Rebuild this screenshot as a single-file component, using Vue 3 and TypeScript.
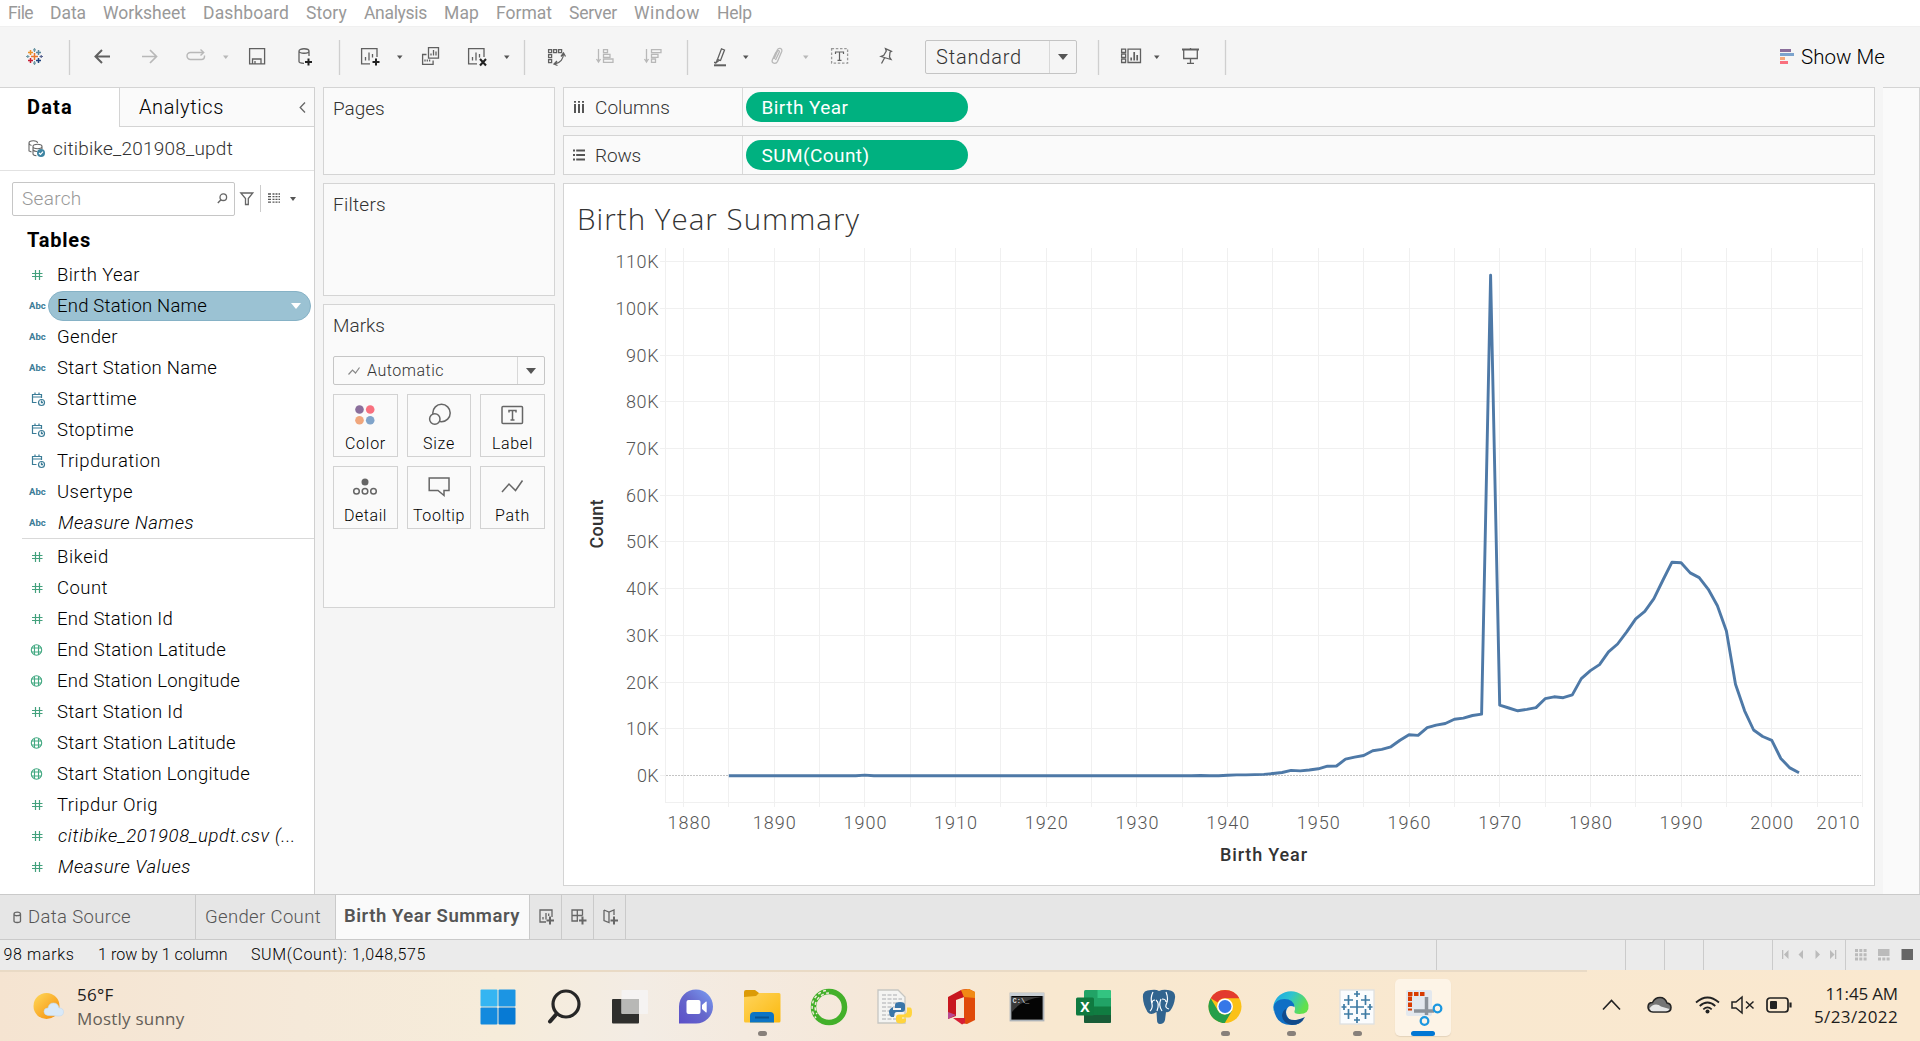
<script setup lang="ts">
import type { Directive } from 'vue'

interface Tool { icon: string; x: number; w: number; dim?: boolean }
interface Field { kind: string; name: string; w: number; italic?: boolean; selected?: boolean }

// Tracks a label so that it fills the given width in pixels.
const vFit: Directive<HTMLElement, number> = {
  mounted(el, { value }) {
    const range = document.createRange()
    range.selectNodeContents(el)
    const width = range.getBoundingClientRect().width
    const count = (el.textContent ?? '').length
    el.style.letterSpacing = `${((value + 2 - width) / count).toFixed(3)}px`
  },
}

const menus: [string, number][] = [
  ['File', 25], ['Data', 36], ['Worksheet', 83], ['Dashboard', 86], ['Story', 41], ['Analysis', 63],
  ['Map', 35], ['Format', 56], ['Server', 48], ['Window', 66], ['Help', 35],
]

const glyph: Record<string, string> = {
  logo: `<g stroke-width="1.5"><path stroke="#e8762c" d="M8.5 5v7M5 8.5h7"/><path stroke="#c72037" d="M4.5 10v5M2 12.5h5"/><path stroke="#1f447e" d="M12.5 10v5M10 12.5h5"/><path stroke="#eb9129" d="M4.500 2v5M2 4.5h5"/><path stroke="#59879b" d="M12.5 2v5M10 4.500h5"/><g stroke-width="1.200"><path stroke="#7099a6" d="M8.500 0v4M7 1.800h3M8.500 13v4M7 15.200h3"/><path stroke="#5b6591" d="M15.200 7v3M13.500 8.500h3.500"/><path stroke="#7099a6" d="M1.800 7v3M0 8.500h3.500"/></g></g>`,
  sep: `<path stroke="#cfcfcf" d="M.5 -8v35"/>`,
  back: `<path stroke-width="2" d="M16 8.500H1.500M8 2L1.500 8.500L8 15"/>`,
  fwd: `<path stroke-width="1.700" d="M0 8.500h14.500M8 2l6.500 6.500L8 15"/>`,
  redo: `<path stroke-width="1.400" d="M5 11.500H3.500a3 3 0 0 1 0-7H16M13.500 1.500l3.200 3l-3.200 3M17.500 7.500v1a3 3 0 0 1-3 3H5"/>`,
  caret: `<path fill="currentColor" stroke="none" d="M0 7.500h5.500L2.750 11z"/>`,
  save: `<path d="M.6 .6h15v15.300H.6zM3.500 15.500V11h8.500v4.500M6 13v2.500"/>`,
  db: `<path d="M1 3v10.500c0 1 2 1.800 5 1.800M1 3c0-3 10-3 10 0s-10 3-10 0M11 3v5"/><path stroke="#222" stroke-width="2" d="M10.500 10.500v7M7 14h7"/>`,
  sheet: `<path d="M16 9V.6H.6v15.200H9M4.500 12.500V9M8 12.500V4.500M11.500 9.500V6"/><path stroke="#222" stroke-width="2" d="M15 10.500v7M11.500 14h7"/>`,
  dup: `<path d="M4.500 6.500H.6v9.900h10.500v-4M6.500 -.4h10v10.500h-10zM9 7.500v-2M11.500 7.500V2M14 7.500V3.500M3 13.500v-2M5.300 13.500v-2M7.600 13.500v-2"/>`,
  clear: `<path d="M16 9V.6H.6v15.200H9M4.500 12.500V9M8 12.500V4.500M11.500 9.500V6"/><path stroke="#222" stroke-width="2.100" d="M12 11l6 6.500M18 11l-6 6.500"/>`,
  swap: `<path d="M.6 1.600h3v3h-3zM5.600 1.600h3v3h-3zM10.600 1.600h3v3h-3zM.6 6.600h3v3h-3zM.6 11.600h3v3h-3zM15.500 5.500c0 5-3 9.500-9 10.500M13 8.500l2.500-3.500l2 3.500M9 13l-3 3l3.500 1.500"/>`,
  asc: `<path stroke-width="1.300" d="M2.500 1v12M.5 11l2 3l2-3M7.500 1.600h4v3h-4zM7.500 6.300h6.500v3H7.500zM7.500 11h9.500v3.300H7.500z"/>`,
  desc: `<path stroke-width="1.300" d="M2.500 1v12M.5 11l2 3l2-3M7.500 1.600h9.500v3H7.500zM7.500 6.300h6.500v3H7.500zM7.500 11h4v3.300h-4z"/>`,
  pen: `<path d="M7.500 .8l3 1.200l-4 10.500l-3-1.200zM3.300 11.500l-1 3l3-2.200M0 14.500h3"/><path stroke-width="2" d="M0 17.300h12"/>`,
  clip: `<path d="M3 9.500L6.300 2C7.500 -.6 11.500 0 10.800 3.200L6.500 13.500c-1.500 3-6.500 2-5.200-1.500L5 4M4.500 12L8.300 4c.5-1.500-1.500-2-2-.5L3 11"/>`,
  text: `<path stroke-dasharray="2.500 1.700" stroke="#999" d="M.6 .6h16v14.500H.6z"/><path stroke-width="1.200" d="M4.500 6V4h8v2M8.500 4v8.500M6.500 12.300h4"/>`,
  pin: `<path d="M6.500 .6l6 2.700l-1.500 1L10.500 9l1.500 2.500L2 8.500l2.800-1.200L7.300 3zM5.500 10L2.500 15.500"/>`,
  show: `<path d="M.6 1.100h4v3.400h-4zM.6 6.100h4v3.400h-4zM.6 11.100h4v3.400h-4zM7 1.100h12.500v13.400H7z"/><path stroke-width="1.700" d="M10.200 12.500V9.500M13.200 12.500V4M16.200 12.500V7"/>`,
  present: `<path stroke-width="2" d="M0 1.500h17"/><path d="M1.700 1.500v9h13.600v-9M8.500 10.500v4.500M5 15.300h7M8.500 0v1.500"/>`,
}

const tools: Tool[] = [
  { icon: 'logo', x: 26, w: 18 }, { icon: 'sep', x: 69, w: 1 }, { icon: 'back', x: 94, w: 17 },
  { icon: 'fwd', x: 142, w: 17, dim: true }, { icon: 'redo', x: 187, w: 19, dim: true },
  { icon: 'caret', x: 223, w: 6, dim: true }, { icon: 'save', x: 249, w: 17 }, { icon: 'db', x: 298, w: 16 },
  { icon: 'sep', x: 339, w: 1 }, { icon: 'sheet', x: 361, w: 20 }, { icon: 'caret', x: 397, w: 6 },
  { icon: 'dup', x: 422, w: 18 }, { icon: 'clear', x: 468, w: 20 }, { icon: 'caret', x: 504, w: 6 },
  { icon: 'sep', x: 524, w: 1 }, { icon: 'swap', x: 548, w: 18 }, { icon: 'asc', x: 596, w: 18, dim: true },
  { icon: 'desc', x: 644, w: 18, dim: true }, { icon: 'sep', x: 687, w: 1 }, { icon: 'pen', x: 714, w: 13 },
  { icon: 'caret', x: 743, w: 6 }, { icon: 'clip', x: 771, w: 13, dim: true },
  { icon: 'caret', x: 803, w: 6, dim: true }, { icon: 'text', x: 831, w: 18 }, { icon: 'pin', x: 879, w: 13 },
]
const toolsAfter: Tool[] = [
  { icon: 'sep', x: 1098, w: 1 }, { icon: 'show', x: 1121, w: 21 }, { icon: 'caret', x: 1154, w: 6 },
  { icon: 'present', x: 1182, w: 18 }, { icon: 'sep', x: 1225, w: 1 },
]
const gapBefore = (list: Tool[], i: number, start: number) =>
  i === 0 ? list[0].x - start : list[i].x - list[i - 1].x - list[i - 1].w

const dimensions: Field[] = [
  { kind: 'num', name: 'Birth Year', w: 81 },
  { kind: 'abc', name: 'End Station Name', w: 148, selected: true },
  { kind: 'abc', name: 'Gender', w: 59 },
  { kind: 'abc', name: 'Start Station Name', w: 158 },
  { kind: 'date', name: 'Starttime', w: 78 },
  { kind: 'date', name: 'Stoptime', w: 75 },
  { kind: 'date', name: 'Tripduration', w: 102 },
  { kind: 'abc', name: 'Usertype', w: 74 },
  { kind: 'abc', name: 'Measure Names', w: 134, italic: true },
]
const measures: Field[] = [
  { kind: 'num', name: 'Bikeid', w: 50 },
  { kind: 'num', name: 'Count', w: 49 },
  { kind: 'num', name: 'End Station Id', w: 114 },
  { kind: 'geo', name: 'End Station Latitude', w: 167 },
  { kind: 'geo', name: 'End Station Longitude', w: 181 },
  { kind: 'num', name: 'Start Station Id', w: 124 },
  { kind: 'geo', name: 'Start Station Latitude', w: 177 },
  { kind: 'geo', name: 'Start Station Longitude', w: 191 },
  { kind: 'num', name: 'Tripdur Orig', w: 99 },
  { kind: 'num', name: 'citibike_201908_updt.csv (...', w: 236, italic: true },
  { kind: 'num', name: 'Measure Values', w: 131, italic: true },
]
const fieldGlyph: Record<string, string> = {
  num: `<path stroke="#43a17d" stroke-width="1.200" d="M6.500 3v10M10.500 3v10M3 6.500h10.500M3 9.500h10.500"/>`,
  date: `<path stroke="#3b7c97" stroke-width="1.200" d="M7.500 11.500H3.500V3.500h9V7M3.500 6h9M6 1.500V4M10 1.500V4"/><circle cx="12.500" cy="11.500" r="3" stroke="#3b7c97" stroke-width="1.200"/><path stroke="#3b7c97" d="M12.500 9.500v2H14"/>`,
  geo: `<g stroke="#43a982" stroke-width="1.100"><circle cx="7.500" cy="8" r="5.200"/><path d="M2.500 6h10M2.500 10h10M5.500 3.300v9.400M9.500 3.300v9.400"/></g>`,
}

const cards: [string, string, number][] = [
  ['Color', `<g stroke="none"><circle cx="25.500" cy="14.500" r="4.300" fill="#8a6e9b"/><circle cx="36.200" cy="14.500" r="4.300" fill="#f8707e"/><circle cx="25.500" cy="25.200" r="4.300" fill="#f0a67c"/><circle cx="36.200" cy="25.200" r="4.300" fill="#80a4ca"/></g>`, 39],
  ['Size', `<circle cx="33.500" cy="18" r="8.700"/><circle cx="26.800" cy="24" r="5.200" fill="#fafafa"/>`, 30],
  ['Label', `<rect x="21" y="11.500" width="20.500" height="17" rx="1"/><path d="M28 17.500v-2h7v2M31.500 15.500v9.300M29.500 25h4"/>`, 39],
  ['Detail', `<circle cx="31" cy="15" r="3.500" fill="#666" stroke="none"/><circle cx="22.500" cy="24.300" r="2.800"/><circle cx="31" cy="24.300" r="2.800"/><circle cx="39.500" cy="24.300" r="2.800"/>`, 41],
  ['Tooltip', `<path d="M21.200 11H41V23.500H36v5L30 23.500H21.200z"/>`, 50],
  ['Path', `<path d="M21 25l7-8l6.500 6.500l7-10"/>`, 33],
]

// Riders per birth year, in thousands, 1940 onwards.
const recent = [
  0.1, 0.2, 0.2, 0.25, 0.3, 0.5, 0.7, 1.15, 1.05, 1.25, 1.5, 2.05, 2.1, 3.55, 4, 4.35, 5.35, 5.65, 6.2, 7.6,
  8.8, 8.65, 10.3, 10.85, 11.2, 12.1, 12.35, 12.9, 13.2, 107.1, 15.1, 14.5, 13.9, 14.2, 14.6, 16.5, 16.9,
  16.7, 17.3, 20.8, 22.5, 23.8, 26.5, 28.2, 30.8, 33.6, 35.2, 37.9, 41.9, 45.7, 45.6, 43.4, 42.4, 39.9, 36.4,
  31, 19.6, 13.9, 9.8, 8.4, 7.6, 3.7, 1.7, 0.65,
]
const early = Array.from({ length: 55 }, (_, i) => (i === 15 ? 0.16 : i === 52 ? 0.06 : 0))
const xOf = (year: number) => 683.5 + (year - 1880) * 9.069
const yOf = (k: number) => 775.8 - k * 4.674
const linePath = [...early, ...recent].map((k, i) => `${xOf(1885 + i).toFixed(1)},${yOf(k).toFixed(1)}`).join(' ')
const yTicks = Array.from({ length: 12 }, (_, i) => ({ label: `${i * 10}K`, y: Math.floor(yOf(i * 10) - 0.1) + 0.5, w: i === 0 ? 21.5 : i > 9 ? 43 : 32.5 }))
const xGrid = Array.from({ length: 27 }, (_, i) => Math.floor(xOf(1880 + i * 5)) + 0.5)
const xTicks = Array.from({ length: 14 }, (_, i) => ({ label: 1880 + i * 10, x: i === 0 ? 689 : i === 13 ? 1838 : xOf(1880 + i * 10) }))

const newTabs = [
  `<path d="M13 8V1H1v12h6M4 10.500V8M7 10.500V4M9.700 7V4.500"/><path stroke-width="2" d="M11 7.500v8M7.500 11.500h7.500"/>`,
  `<path d="M11.500 6.500V1H1v11h6M1 6.500h10.500M6.300 1v11"/><path stroke-width="2" d="M11.500 7.500v8M8 11.500h7.500"/>`,
  `<path d="M1 1l5 2l5-2v5M1 1v10.500l5 2V3"/><path stroke-width="2" d="M11 7.500v8M7.500 11.500h7.500"/>`,
]

const apps: { name: string; art: string; run?: boolean; active?: boolean }[] = [
  { name: 'start', art: `<rect x="2.500" y="2.500" width="17" height="17" rx="1" fill="#35b5f2"/><rect x="20.500" y="2.500" width="17" height="17" rx="1" fill="#1c95e3"/><rect x="2.500" y="20.500" width="17" height="17" rx="1" fill="#138ade"/><rect x="20.500" y="20.500" width="17" height="17" rx="1" fill="#077ad4"/>` },
  { name: 'search', art: `<circle cx="22" cy="17" r="13" stroke="#262626" stroke-width="3.200"/><path stroke="#262626" stroke-width="4" stroke-linecap="round" d="M12.500 27L6 34.500"/>` },
  { name: 'views', art: `<rect x="2" y="12" width="27" height="24.500" rx="1" fill="#2f2f2d"/><rect x="11.500" y="3" width="26.500" height="24" rx="1" fill="#f5f5f5" fill-opacity=".85"/><path fill="#b8b8b6" d="M11.500 12H29v15H12.500a1 1 0 0 1-1-1z"/>` },
  { name: 'chat', art: `<path fill="url(#chatFill)" d="M3 36.500V19.500A17 17 0 1 1 20 36.500H3z"/><rect x="10.500" y="13" width="14" height="14" rx="2" fill="#fff"/><path fill="#fff" d="M26 18l4-3.500q.7-.3.7.7v9.600q0 1-.7.600L26 22z"/>` },
  { name: 'files', run: true, art: `<path fill="#dc9b06" d="M2 5q0-2 2-2h9l4 3h20v5H2z"/><path fill="url(#folderFill)" d="M2 10l12-1l3-3h20q1.500 0 1.500 1.500V34q0 1.500-1.500 1.500H3.500Q2 35.500 2 34z"/><path fill="#0c74c4" d="M8 35.500V29q0-4 4-4h16q4 0 4 4v6.500z"/><path stroke="#075291" stroke-width="2" d="M13 30.500h14"/>` },
  { name: 'conda', art: `<circle cx="20" cy="20" r="15.500" stroke="#43b02a" stroke-width="5.500"/><path stroke="#f3e9dd" stroke-width="1.500" stroke-dasharray="3 2.500" d="M17 3.500A17 17 0 0 0 7 31M20 6A14 14 0 0 0 8 27"/>` },
  { name: 'idle', art: `<path fill="#f4f4f2" stroke="#c6c6c2" d="M3 3h20l7 7v26H3z"/><path stroke="#c2c4c6" stroke-width="1.300" stroke-dasharray="4 1.500" d="M7 8h15M7 12h20M7 16h17M7 20h15M7 24h13M7 28h13M7 32h18"/><path fill="#3a76a9" d="M18 23h8v-2h-6v-3q0-3 5-3t5 3v4q0 3-3 3h-5q-3 0-3 5h-3q-2-2-2-5t4-5z"/><path fill="#ffd43d" d="M35 20.500h-3v3q0 4-4 4h-4q-3 0-3 3v3q0 3 5 3t5-3v-2h-4v-1h7q3 0 3-5t-2-5z"/>` },
  { name: 'office', art: `<path fill="#c8171f" d="M7 10L20 3l6-1v7l-11 4v16l-8 3z"/><path fill="#b84a92" d="M7 25v7l8-4z"/><path fill="#e04a0a" d="M20 3l8-1l6 3v28l-8 4l-3-.5V10z"/><path fill="#f08a16" d="M20 3l8-1l6 3v6l-11-1z"/><path fill="#d71f35" d="M12 31h12v5l-3 1.500z"/>` },
  { name: 'cmd', art: `<rect x="3.500" y="6.500" width="33" height="27" fill="#050505" stroke="#aeb4b9" stroke-width="1.800"/><path fill="#c9cfd4" d="M3 6h34v3H3z"/><path fill="#3a3a3a" d="M5 10h30q-20 2-30 15z"/><text x="5.500" y="16" class="term">C:\\_</text>` },
  { name: 'excel', art: `<rect x="11" y="3" width="27" height="33" rx="1.500" fill="#21a366"/><path fill="#33c481" d="M24.500 3H36.500Q38 3 38 4.500V11H24.500z"/><path fill="#107c41" d="M11 19.500h13.500V28H11zM24.500 19.500H38V28H24.500z"/><path fill="#185c37" d="M11 28h27v6.500q0 1.500-1.500 1.500h-24Q11 36 11 34.500z"/><rect x="3" y="10.500" width="18" height="18" rx="1.500" fill="#0f7a40"/><text x="12" y="25" text-anchor="middle" class="excel">X</text>` },
  { name: 'pgsql', art: `<path fill="#31648f" d="M4 11Q3 3 12 3q5-1 8 1q4-2 9-1q8 1 7 8q-1 8-5 13q-3 2-4 1l-1 8q-1 4-5 4q-3 0-3-4l-.500-8q-6 4-9 0Q4 17 4 11z"/><path stroke="#fff" stroke-width="1.200" d="M14 5q-3 6-1 12q1 4-2 7M27 5q3 7 0 13q-1 3 3 4M16 13q-3 0-3 3M23 12q4 0 4 3M17 13q4 3 1 11M22 12q-3 6 1 12"/>` },
  { name: 'chrome', run: true, art: `<circle cx="20" cy="19.500" r="16.500" fill="#fbc116"/><path fill="#e33b2e" d="M20 3a16.500 16.500 0 0 1 14.300 8.200H20a8.200 8.200 0 0 0-7.200 4.200L5.700 11.200A16.500 16.500 0 0 1 20 3z"/><path fill="#269f4a" d="M5.700 11.200l7.200 12.400a8.200 8.200 0 0 0 7.100 4.100l-2.500 8.200A16.500 16.500 0 0 1 5.700 11.200zM27 23.700l-7.200 12.300h-2.500L20 27.700z"/><circle cx="20" cy="19.500" r="8" fill="#fff"/><circle cx="20" cy="19.500" r="6.500" fill="#3577e8"/>` },
  { name: 'edge', run: true, art: `<path fill="url(#edgeTop)" d="M2.500 18A18 18 0 0 1 37.500 18q1 9-9 9q-6 0-5-3q1.500-3-1-6t-8-2T2.500 24z"/><path fill="#0f6fc5" d="M2.500 20q2-8 11-8t10 8q-6-3-8 3t5 11t12-1q-4 5-12 5Q4 38 2.500 20z"/><path fill="#114a8b" d="M15 22q-2 12 10 11q5-1 9-3q-4 8-13 8q-10-2-10-10q1-5 4-6z"/>` },
  { name: 'tableau', run: true, art: `<rect x="3" y="3" width="34" height="34" fill="#fbfcfd" stroke="#dde0e2"/><g stroke="#3e7ba4" stroke-width="1.700"><path d="M20 13v14M13 20h14M11.500 8v10M7 13h9M28.500 8v10M24 13h9M11.500 22v10M7 27h9M28.500 22v10M24 27h9M20 4v6M17 7h6M20 30v6M17 33h6M7 17v6M4.500 20h5M33 17v6M30.500 20h5"/></g>` },
  { name: 'snip', run: true, active: true, art: `<rect x="3" y="3" width="26" height="26" rx="2" fill="#e3e8ee"/><path stroke="#d83b01" stroke-width="4" stroke-dasharray="4.500 1.500" d="M5 7h17M7 9.500v14"/><path stroke="#8b929a" stroke-width="3.500" d="M11 24h20M23.500 10v18"/><circle cx="34.500" cy="21.500" r="3.800" stroke="#1b97e0" stroke-width="2.300"/><circle cx="21.500" cy="34" r="3.800" stroke="#1b97e0" stroke-width="2.300"/>` },
]
</script>

<template>
  <div class="screen">
    <nav class="menu">
      <span v-for="[name, w] in menus" :key="name" v-fit="w - 2">{{ name }}</span>
    </nav>

    <header class="toolbar">
      <svg v-for="(t, i) in tools" :key="i" class="tool" :class="{ dim: t.dim }" :style="{ width: t.w + 'px', marginLeft: gapBefore(tools, i, 0) + 'px' }" height="18" v-html="glyph[t.icon]" />
      <div class="fit-select">
        <span v-fit="84">Standard</span>
        <i class="drop"><b class="tri" /></i>
      </div>
      <svg v-for="(t, i) in toolsAfter" :key="'a' + i" class="tool" :style="{ width: t.w + 'px', marginLeft: gapBefore(toolsAfter, i, 1077) + 'px' }" height="18" v-html="glyph[t.icon]" />
      <div class="show-me">
        <svg width="14" height="16"><path fill="#8a6e9b" d="M0 0h11v3H0z" /><path fill="#7ba3cd" d="M0 4h14v3H0z" /><path fill="#f4a77a" d="M0 8h5v3H0z" /><path fill="#f96f7d" d="M0 12h8v3H0z" /></svg>
        <span v-fit="82">Show Me</span>
      </div>
    </header>

    <main class="work">
      <aside class="data">
        <div class="pane-tabs">
          <div class="pane-tab on"><span v-fit="44">Data</span></div>
          <div class="pane-tab">
            <span v-fit="83">Analytics</span>
            <svg width="7" height="11"><path d="M6 .5L1.200 5.500L6 10.500" /></svg>
          </div>
        </div>
        <div class="source">
          <svg width="18" height="18"><path d="M8 15.500H5.500M3.500 12L1 11V3c0-3 8.500-3 8.500 0M3.500 5.500C2 5 1 4 1 3M5 6.500c0-3 9-3 9 0s-9 3-9 0v7.500c0 1 1.500 1.500 3.500 1.700M14 6.500V9M5 10c1 1 2 1.500 4 1.500" /><circle cx="13" cy="13" r="4" fill="#3d84a2" stroke="none" /><path stroke="#fff" stroke-width="1.200" d="M11 13l1.500 1.500L15 11.700" /></svg>
          <span v-fit="178">citibike_201908_updt</span>
        </div>
        <div class="find">
          <div class="search">
            <span v-fit="57.500">Search</span>
            <svg width="11" height="11"><circle cx="6.300" cy="4.200" r="3.300" /><path stroke-width="1.400" d="M4 6.700L.8 10" /></svg>
          </div>
          <svg class="funnel" width="14" height="14"><path d="M.8 1h12L8.300 6.500v6H5.500v-6z" /></svg>
          <i class="bar" />
          <svg class="grid-ico" width="12" height="11"><path stroke="#555" stroke-dasharray="3 1.500 2 1 2 1" d="M0 1h12M0 3.700h12M0 6.400h12M0 9.200h12" /></svg>
          <b class="tri small" />
        </div>
        <h2><span v-fit="62">Tables</span></h2>
        <div v-for="(group, g) in [dimensions, measures]" :key="g" class="fields">
          <div v-for="f in group" :key="f.name" class="field">
            <span v-if="f.kind === 'abc'" class="abc">Abc</span>
            <svg v-else class="kind" width="16" height="16" v-html="fieldGlyph[f.kind]" />
            <div class="name" :class="{ italic: f.italic, selected: f.selected }">
              <span v-fit="f.w">{{ f.name }}</span>
              <b v-if="f.selected" class="tri white" />
            </div>
          </div>
        </div>
      </aside>

      <section class="cards">
        <div class="card pages"><h3 v-fit="49.500">Pages</h3></div>
        <div class="card filters"><h3 v-fit="51">Filters</h3></div>
        <div class="card marks">
          <h3 v-fit="50">Marks</h3>
          <div class="mark-type">
            <svg width="12" height="10"><path stroke="#888" stroke-width="1.200" d="M.5 8.500l4-4.500l3 3l4-5.500" /></svg>
            <span v-fit="75">Automatic</span>
            <i class="drop"><b class="tri" /></i>
          </div>
          <div class="mark-grid">
            <div v-for="[label, art, w] in cards" :key="label" class="mark">
              <svg width="63" height="39" v-html="art" />
              <span v-fit="w">{{ label }}</span>
            </div>
          </div>
        </div>
      </section>

      <section class="view">
        <div class="shelf">
          <div class="shelf-name">
            <svg width="12" height="12"><path stroke="#555" stroke-width="2" d="M2 0v1.700M6 0v1.700M10 0v1.700M2 3v9M6 3v9M10 3v9" /></svg>
            <span v-fit="73">Columns</span>
          </div>
          <div class="pill"><span v-fit="85">Birth Year</span></div>
        </div>
        <div class="shelf">
          <div class="shelf-name">
            <svg width="12" height="12"><path stroke="#555" stroke-width="2" d="M0 1.500h2M3.200 1.500H12M0 6h2M3.200 6H12M0 10.500h2M3.200 10.500H12" /></svg>
            <span v-fit="44">Rows</span>
          </div>
          <div class="pill"><span v-fit="106">SUM(Count)</span></div>
        </div>
        <div class="sheet">
          <svg class="chart" width="1310" height="701" viewBox="564 184 1310 701">
            <text class="title" x="577" y="230" textLength="282">Birth Year Summary</text>
            <g class="lines">
              <path d="M665.500 248V803M665 802.500H1862" />
              <path v-for="t in yTicks.slice(1)" :key="t.label" :d="`M660 ${t.y}H1862`" />
              <path v-for="x in xGrid" :key="x" :d="`M${x} 248V807`" />
            </g>
            <path d="M660 775.500H665" class="lines" />
            <path d="M666 775.500H1861" class="zero" />
            <polyline class="series" :points="linePath" />
            <g class="ticks">
              <text v-for="t in yTicks" :key="t.label" x="658.500" :y="t.y + 6" text-anchor="end" :textLength="t.w">{{ t.label }}</text>
              <text v-for="t in xTicks" :key="t.label" :x="t.x" y="828.800" text-anchor="middle" textLength="43">{{ t.label }}</text>
            </g>
            <text class="axis" x="1263.500" y="860.500" text-anchor="middle" textLength="87">Birth Year</text>
            <text class="axis" transform="translate(602.500 524) rotate(-90)" text-anchor="middle" textLength="49">Count</text>
          </svg>
        </div>
      </section>
      <div class="strip" />
    </main>

    <div class="tabs">
      <div class="tab source-tab">
        <svg width="9" height="13"><path d="M1 3v7c0 2 6.500 2 6.500 0V3c0-2.600-6.500-2.600-6.500 0s6.500 2 6.500 0" /></svg>
        <span v-fit="101">Data Source</span>
      </div>
      <div class="tab gender-tab"><span v-fit="114">Gender Count</span></div>
      <div class="tab active-tab"><span v-fit="174">Birth Year Summary</span></div>
      <div v-for="(art, i) in newTabs" :key="i" class="tab new"><svg width="16" height="17" v-html="art" /></div>
    </div>

    <div class="status">
      <div class="status-text"><span v-fit="69">98 marks</span><span v-fit="127.500">1 row by 1 column</span><span v-fit="173">SUM(Count): 1,048,575</span></div>
      <i class="cell c1" /><i class="cell c2" /><i class="cell c3" /><i class="cell c4" />
      <div class="cell c5">
        <svg width="56" height="10"><path fill="#bbb" stroke="none" d="M0 0h1.300v9H0zM6.500 0v9L2 4.500zM21 0v9l-4.500-4.500zM33.500 0v9L38 4.500zM48 0v9l4.500-4.500zM53 0h1.300v9H53z" /></svg>
      </div>
      <div class="cell c6">
        <svg width="60" height="12"><path stroke="#bbb" stroke-width="3" stroke-dasharray="3 1.300" d="M0 1.500h12M0 5.700h12M0 9.900h12M23 9.900h12" /><path fill="#bbb" stroke="none" d="M23 0h11.500v7H23z" /><path fill="#666" stroke="none" d="M46.500 0h11.500v11H46.500z" /></svg>
      </div>
    </div>

    <footer class="taskbar">
      <div class="weather">
        <svg width="34" height="34">
          <defs>
            <linearGradient id="sunFill" x1="0" y1="0" x2="1" y2="1"><stop offset="0" stop-color="#ffd95a" /><stop offset="1" stop-color="#f58a07" /></linearGradient>
            <linearGradient id="chatFill" x1="0" y1="1" x2="1" y2="0"><stop offset="0" stop-color="#5b4fc8" /><stop offset=".5" stop-color="#6668cc" /><stop offset="1" stop-color="#7ba0f5" /></linearGradient>
            <linearGradient id="folderFill" x1="0" y1="0" x2="1" y2="1"><stop offset="0" stop-color="#ffd45c" /><stop offset="1" stop-color="#fbb90f" /></linearGradient>
            <linearGradient id="edgeTop" x1="0" y1="0" x2="1" y2=".4"><stop offset="0" stop-color="#1ba3e8" /><stop offset=".5" stop-color="#2fc3cf" /><stop offset="1" stop-color="#62e04c" /></linearGradient>
          </defs>
          <circle cx="14.500" cy="16" r="13" fill="url(#sunFill)" stroke="none" /><path fill="#d9e9f8" stroke="#c3d9ee" stroke-width=".6" d="M16 25.500q-4-.5-4-4t4-3.500q1-5 5.500-5t5.500 5q4.500 0 4.500 4t-4.500 4z" />
        </svg>
        <div class="two"><span v-fit="34.500">56°F</span><span v-fit="105.500" class="muted">Mostly sunny</span></div>
      </div>
      <div class="apps">
        <div v-for="a in apps" :key="a.name" class="app" :class="{ run: a.run, active: a.active }">
          <svg width="40" height="40" v-html="a.art" />
        </div>
      </div>
      <div class="tray">
        <svg class="up" width="19" height="12"><path stroke="#222" stroke-width="1.600" d="M1 10.500L9.500 1.500L18 10.500" /></svg>
        <svg class="cloud" width="25" height="18"><path fill="#757575" stroke="#222" stroke-width="1.500" d="M6 16Q1 15.500 1 11t4.500-4.500Q8 1.500 13 1.500t7 5.500q4 .5 4 4.500t-4.500 4.500z" /><path fill="#e6e6e6" stroke="none" d="M2.500 12.500Q5 8.500 9 8.500q3 0 5 2l8.500 2.500q-1 2.300-3.500 2.300H6q-2.500 0-3.500-2.800z" /></svg>
        <svg class="wifi" width="25" height="18"><g stroke="#222" stroke-width="1.700"><path d="M1 6.500Q12.500 -3.500 24 6.500M4.700 10Q12.500 3 20.300 10M8.300 13.300Q12.500 9.500 16.700 13.300" /></g><circle cx="12.500" cy="15.500" r="2" fill="#222" stroke="none" /></svg>
        <svg class="sound" width="24" height="18"><path stroke="#222" stroke-width="1.500" d="M1 6h4l6-5v16l-6-5H1zM15 5.500l7.500 7M22.500 5.500l-7.500 7" /></svg>
        <svg class="battery" width="27" height="16"><rect x="1" y="1" width="21" height="14" rx="3" stroke="#222" stroke-width="1.700" /><rect x="4" y="4" width="7" height="8" rx="1" fill="#222" stroke="none" /><path stroke="#222" stroke-width="2.200" d="M24.500 5.500v5" /></svg>
        <div class="two clock"><span v-fit="70.500">11:45 AM</span><span v-fit="82">5/23/2022</span></div>
      </div>
    </footer>
  </div>
</template>

<style>
html, body { margin: 0; background: #f5f5f5; overflow: hidden; }
.term { font: 700 7px "Liberation Mono", monospace; fill: #ddd; stroke: none; }
.excel { font: 700 14px "Open Sans", sans-serif; fill: #fff; stroke: none; }
</style>

<style scoped>
* { box-sizing: border-box; }
.screen { width: 1920px; height: 1041px; display: flex; flex-direction: column; background: #f5f5f5; color: #111; font-family: Roboto, "Open Sans", sans-serif; font-size: 18px; font-weight: 300; overflow: hidden; }
span { white-space: nowrap; }
svg { flex: none; display: block; fill: none; stroke: #666; stroke-width: 1.3; overflow: visible; }
i { flex: none; display: block; }
h2, h3 { margin: 0; font-weight: inherit; }

.menu { flex: none; height: 26px; padding-left: 8px; display: flex; align-items: center; gap: 17px; background: #fff; color: #999; font-size: 17.500px; font-weight: 400; }

.toolbar { flex: none; height: 61px; display: flex; align-items: center; background: #f5f5f5; border-top: 1px solid #f0f0f0; padding-bottom: 1px; }
.tool { color: #555; stroke: #606060; flex: none; }
.tool.dim { color: #b8b8b8; stroke: #b8b8b8; }
.fit-select { margin: 1px 0 0 33px; width: 152px; height: 34px; display: flex; align-items: center; border: 1px solid #c4c4c4; border-radius: 2px; color: #333; font-size: 20px; padding-left: 10px; }
.fit-select span { padding-bottom: 1px; }
.drop { width: 27px; height: 100%; margin-left: auto; display: flex; align-items: center; justify-content: center; border-left: 1px solid #d8d8d8; }
.tri { flex: none; border: 5px solid transparent; border-top: 6px solid #555; border-bottom: 0; }
.show-me { margin-left: 554px; display: flex; align-items: center; gap: 7px; font-size: 20.500px; color: #000; }
.show-me svg { stroke: none; }

.work { flex: none; height: 807px; display: flex; gap: 8px; }
.data { flex: none; width: 315px; background: #fff; border-right: 1px solid #d0d0d0; border-top: 1px solid #d4d4d4; color: #000; }
.pane-tabs { display: flex; height: 39px; font-size: 20px; }
.pane-tab { flex: 1; display: flex; align-items: center; justify-content: space-between; background: #fafafa; border: 1px solid #d4d4d4; border-width: 0 0 1px 1px; padding: 0 8px 0 19px; }
.pane-tab.on { flex: none; width: 119px; background: #fff; border: 0; padding: 0 0 1px 27px; font-weight: 700; }
.source { height: 44px; border-bottom: 1px solid #e2e2e2; display: flex; align-items: center; gap: 7px; padding-left: 28px; font-size: 19px; color: #333; }
.source svg { stroke-width: 1.100; }
.find { height: 55px; display: flex; align-items: center; padding-left: 12px; }
.search { width: 223px; height: 34px; border: 1px solid #c6c6c6; border-radius: 2px; display: flex; align-items: center; justify-content: space-between; padding: 0 6px 0 9px; font-size: 19px; color: #999; }
.funnel { margin-left: 5px; }
.bar { width: 1px; height: 27px; margin: 0 7px 0 6px; background: #ccc; }
.tri.small { border-width: 4px 3.500px 0; margin-left: 10px; }
h2 { height: 33px; line-height: 28px; padding-left: 27px; font-size: 20px; font-weight: 700; }
.fields + .fields { margin-left: 22px; border-top: 1px solid #d9d9d9; padding-top: 2px; }
.fields + .fields .field { margin-left: -22px; }
.field { height: 31px; display: flex; align-items: center; padding-left: 29px; }
.abc { width: 19px; color: #3b7c97; font: 700 9.500px Roboto, sans-serif; }
.kind { margin-right: 3px; }
.name { width: 263px; height: 30px; display: flex; align-items: center; justify-content: space-between; border-radius: 15px; padding: 0 9px 0 9px; font-size: 18.500px; }
.name.italic { font-style: italic; padding-left: 10px; }
.name.selected { background: #9bc2d3; border: 1px solid #86b2c6; padding: 0 9px 0 8px; }
.tri.white { border-top-color: #fff; }

.cards { flex: none; width: 232px; display: flex; flex-direction: column; gap: 8px; }
.card { background: #fafafa; border: 1px solid #d4d4d4; padding: 0 9px; }
.card h3 { font-size: 19px; line-height: 42px; height: 43px; color: #333; }
.pages { height: 88px; }
.filters { height: 113px; }
.marks { height: 304px; }
.mark-type { height: 29px; margin-top: 8px; display: flex; align-items: center; gap: 7px; padding-left: 14px; border: 1px solid #c6c6c6; border-radius: 2px; font-size: 16px; color: #333; }
.mark-grid { margin-top: 9px; display: grid; grid-template-columns: 65px 64px 65px; grid-auto-rows: 63px; gap: 9px; }
.mark { border: 1px solid #d2d2d2; display: flex; flex-direction: column; align-items: center; font-size: 16px; color: #000; }
.mark svg { stroke-width: 1.500; }

.view { flex: none; width: 1312px; display: flex; flex-direction: column; gap: 8px; }
.shelf { flex: none; height: 40px; display: flex; align-items: center; background: #fafafa; border: 1px solid #d4d4d4; }
.shelf-name { width: 179px; height: 100%; display: flex; align-items: center; gap: 10px; padding-left: 9px; border-right: 1px solid #d9d9d9; font-size: 19px; color: #333; }
.pill { margin-left: 3px; width: 222px; height: 30px; border-radius: 15px; background: #00b180; color: #fff; display: flex; align-items: center; padding-left: 15.500px; font-size: 19px; font-weight: 400; }
.sheet { flex: none; height: 703px; border: 1px solid #d4d4d4; background: #fff; }
.chart { stroke: none; }
.title { font: 300 29.500px "Open Sans", sans-serif; fill: #333; }
.lines { stroke: #f0f0f0; stroke-width: 1; }
.zero { stroke: #c4c4c4; stroke-width: 1; stroke-dasharray: 2 1; }
.series { stroke: #4e79a7; stroke-width: 2.900; stroke-linejoin: round; }
.ticks { font: 300 18px Roboto, sans-serif; fill: #555; }
.axis { font: 500 18px Roboto, sans-serif; fill: #333; }
.strip { flex: none; width: 37px; background: #fafafa; border: 1px solid #d4d4d4; border-width: 1px 1px 0 0; }

.tabs { flex: none; height: 46px; display: flex; background: #e6e6e6; border: 1px solid #cacaca; border-width: 1px 0; color: #555; font-size: 18.500px; }
.tab { display: flex; align-items: center; border-right: 1px solid #cacaca; }
.source-tab { width: 196px; padding-left: 13px; gap: 6px; }
.gender-tab { width: 140px; padding-left: 9px; }
.active-tab { width: 194px; padding: 0 0 2px 8px; background: #fafafa; font-weight: 600; font-size: 18.500px; }
.new { width: 32px; justify-content: center; padding-left: 2px; }
.status { flex: none; height: 30px; display: flex; align-items: stretch; background: #ebebeb; color: #000; font-size: 16px; }
.status-text { width: 1436px; display: flex; align-items: center; gap: 23.500px; padding: 0 0 1px 3.500px; }
.cell { border-left: 1px solid #cbcbcb; display: flex; align-items: center; padding-left: 9px; }
.c1 { width: 189px; } .c2 { width: 39px; } .c3 { width: 39px; } .c4 { width: 69px; } .c5 { width: 73px; } .c6 { width: 75px; }

.taskbar { flex: none; height: 71px; display: flex; background: linear-gradient(90deg, #f5e4d1 0, #f5e9d9 300px, #f6ecda 500px, #f3ece4 640px, #f5e8da 850px, #f8e8d0 1040px, #fae8cf 1920px); color: #1c1c1c; font-family: "Open Sans", sans-serif; font-size: 17px; font-weight: 400; }
.weather { width: 465px; border-top: 2px solid #e9dac5; display: flex; align-items: center; gap: 11px; padding-left: 32px; }
.two { display: flex; flex-direction: column; line-height: 24px; }
.muted { color: #645e57; }
.apps { width: 1122px; border-top: 2px solid #e9dac5; display: flex; }
.app { width: 66.100px; padding-top: 15px; display: flex; flex-direction: column; align-items: center; }
.app svg { stroke: none; }
.app.run::after { content: ""; width: 9px; height: 5px; border-radius: 3px; background: #87807a; margin-top: 4px; }
.app.active { width: 56px; margin: 7px 5px 5px; padding-top: 8px; border-radius: 5px; background: #fdf4e7; box-shadow: 0 1px 1px #e3d3bb; }
.app.active::after { width: 24px; background: #0077d4; }
.tray { flex: 1; display: flex; align-items: center; padding: 0 22px 2px 15px; }
.cloud { margin-left: 26px; } .wifi { margin-left: 23px; } .sound { margin-left: 11px; } .battery { margin-left: 11px; }
.clock { margin-left: auto; align-items: flex-end; line-height: 23px; }
</style>
